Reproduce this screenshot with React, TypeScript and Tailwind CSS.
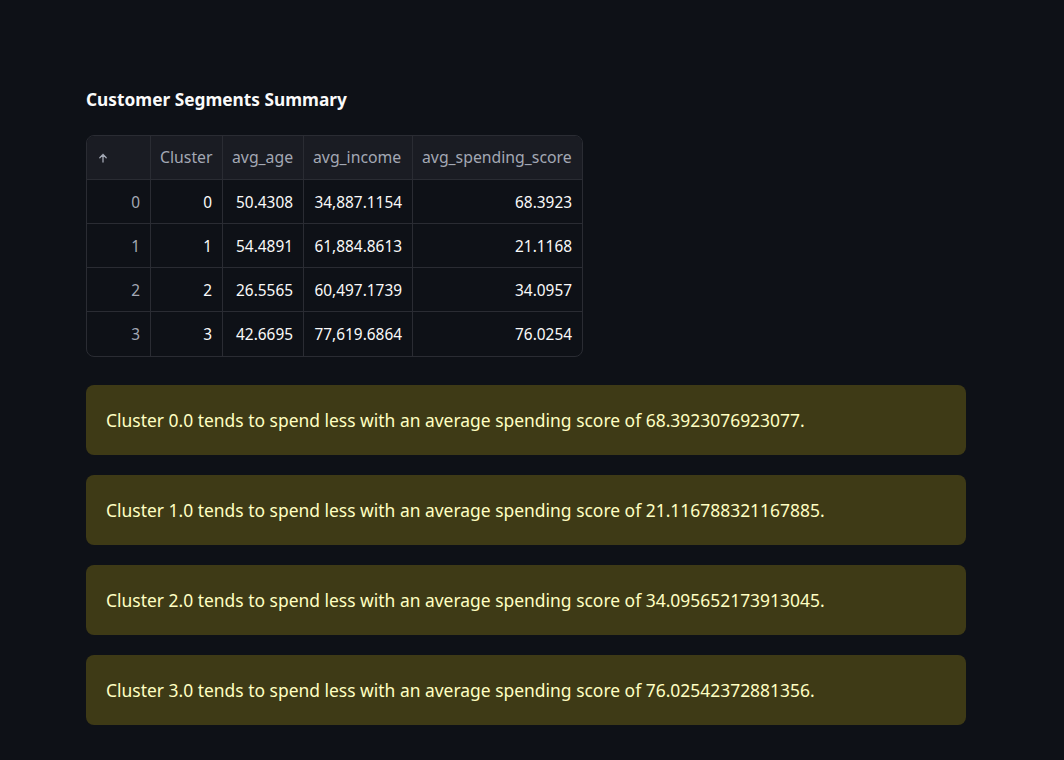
const rows = [
  ["0", "0", "50.4308", "34,887.1154", "68.3923"],
  ["1", "1", "54.4891", "61,884.8613", "21.1168"],
  ["2", "2", "26.5565", "60,497.1739", "34.0957"],
  ["3", "3", "42.6695", "77,619.6864", "76.0254"],
];

const notes = [
  "Cluster 0.0 tends to spend less with an average spending score of 68.3923076923077.",
  "Cluster 1.0 tends to spend less with an average spending score of 21.116788321167885.",
  "Cluster 2.0 tends to spend less with an average spending score of 34.095652173913045.",
  "Cluster 3.0 tends to spend less with an average spending score of 76.02542372881356.",
];

const widths = ["w-[64px]", "w-[72px]", "w-[81px]", "w-[109px]", "w-[171px]"];

export default function App() {
  return (
    <div className="min-h-[760px] bg-[#0e1117] text-[#fafafa] font-['Noto_Sans',sans-serif]">
      <div className="px-[86px] pt-[86px]">
        <h3 className="text-[17.3px] font-bold leading-[28px] mb-[21px]">Customer Segments Summary</h3>

        <div className="w-[497px] rounded-lg border border-[#2a2c33] overflow-hidden">
          <div className="flex h-[44px] bg-[#1a1c23] text-[15.8px] text-[#a3a8b4] border-b border-[#2a2c33]">
            <div className={`${widths[0]} flex items-center pl-[11px] border-r border-[#2a2c33]`}>
              <svg width="10" height="10" viewBox="0 0 10 10" fill="none" stroke="#a3a8b4" strokeWidth="1.3" strokeLinecap="round">
                <path d="M5 9V1.5M1.8 4.7L5 1.5l3.2 3.2" />
              </svg>
            </div>
            {["Cluster", "avg_age", "avg_income", "avg_spending_score"].map((h, i) => (
              <div
                key={h}
                className={`${widths[i + 1]} flex items-center px-[9px] ${i < 3 ? "border-r border-[#2a2c33]" : "flex-1"}`}
              >
                {h}
              </div>
            ))}
          </div>
          {rows.map((r, ri) => (
            <div
              key={ri}
              className={`flex h-[44px] text-[15.4px] ${ri < 3 ? "border-b border-[#2a2c33]" : ""}`}
            >
              {r.map((c, ci) => (
                <div
                  key={ci}
                  className={`${widths[ci]} flex items-center justify-end px-[10px] pt-[2px] ${
                    ci === 0 ? "text-[#a3a8b4]" : "text-[#fafafa]"
                  } ${ci < 4 ? "border-r border-[#2a2c33]" : "flex-1"}`}
                >
                  {c}
                </div>
              ))}
            </div>
          ))}
        </div>

        <div className="mt-[28px] flex flex-col gap-[20px] w-[880px]">
          {notes.map((n) => (
            <div
              key={n}
              className="h-[70px] rounded-lg bg-[#3e3a16] text-[#ffffc2] text-[17.45px] px-[20px] flex items-center"
            >
              {n}
            </div>
          ))}
        </div>
      </div>
    </div>
  );
}
